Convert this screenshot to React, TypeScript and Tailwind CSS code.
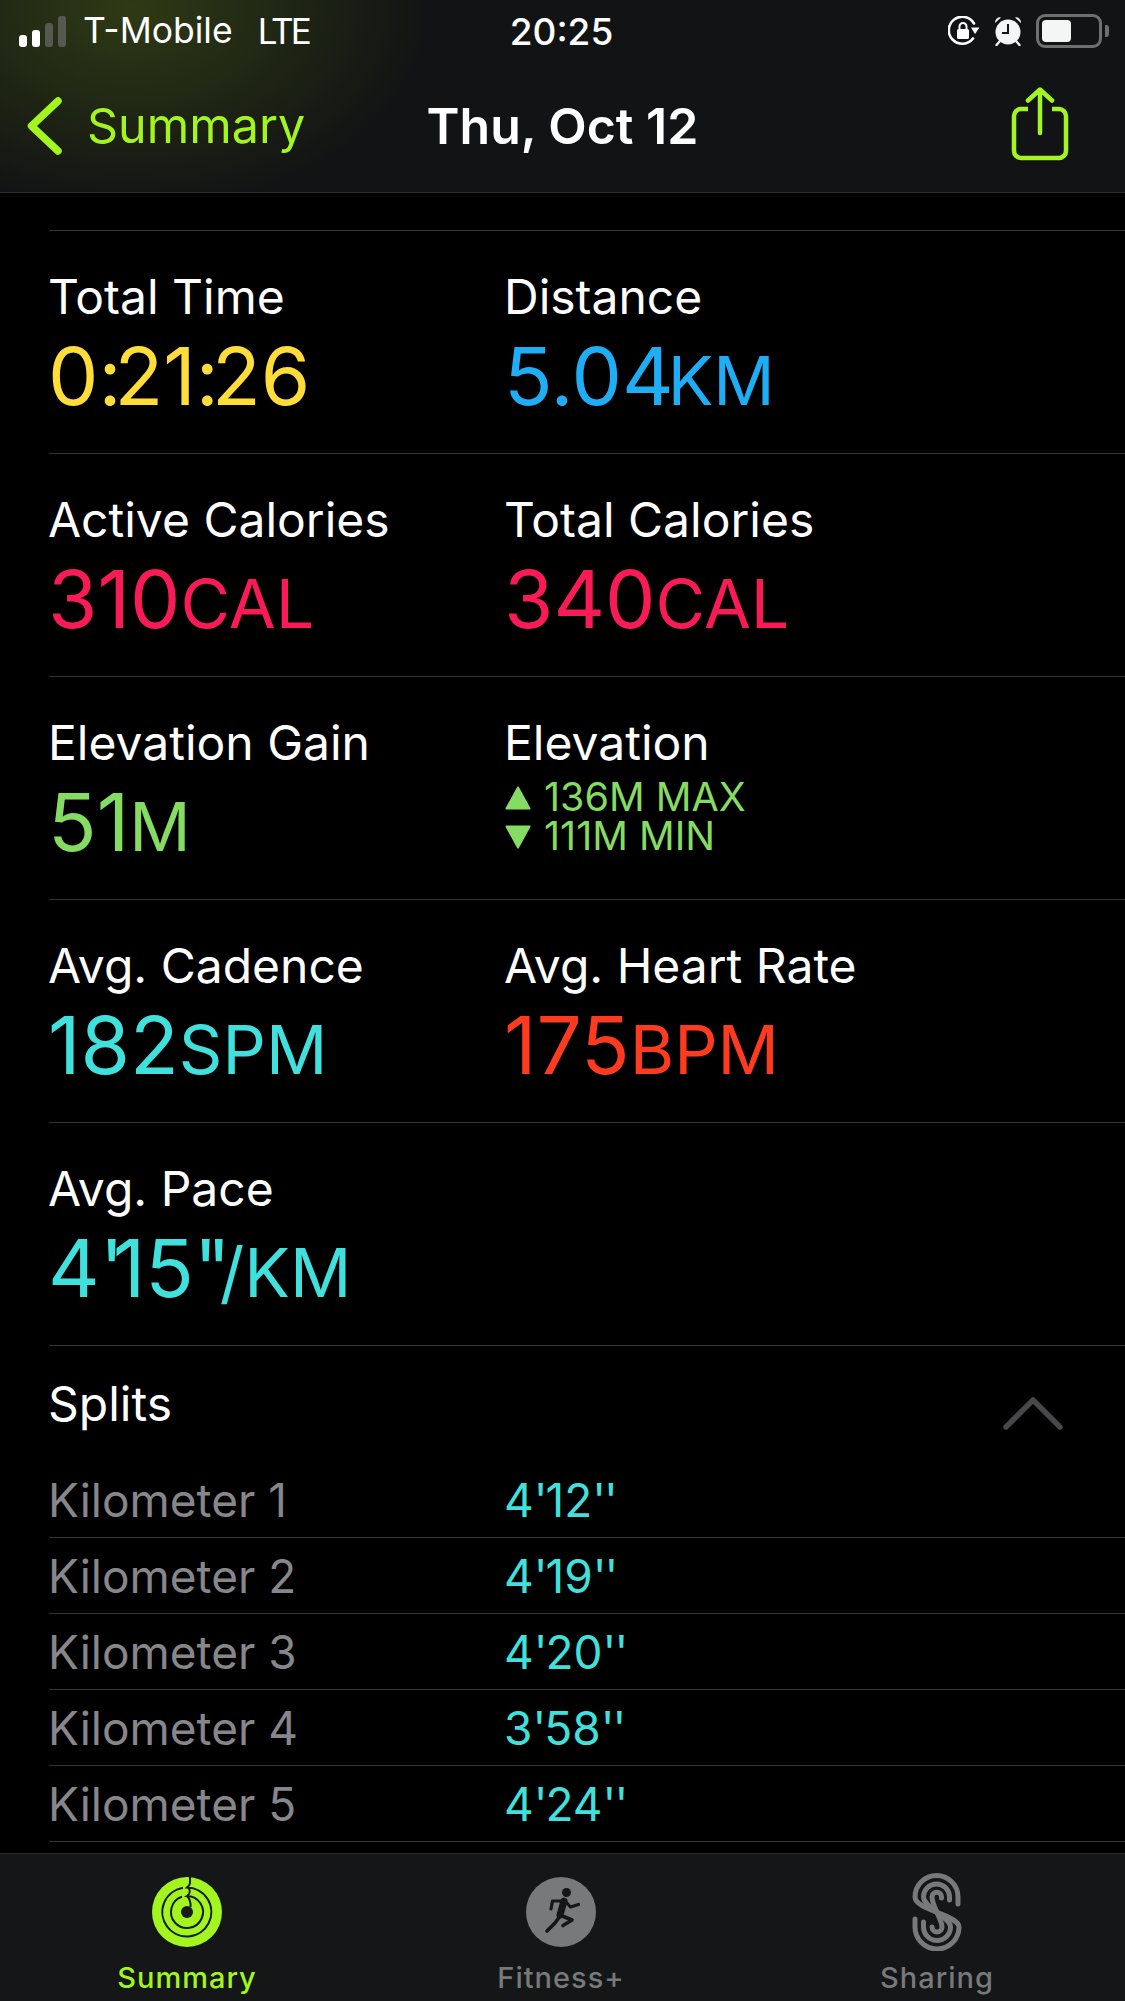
import { ReactNode } from "react";

type Stat = {
  label: string;
  value?: string;
  unit?: string;
  color?: string;
};

// colours are written out in full so the stylesheet picks them up
const ROWS: Stat[][] = [
  [
    { label: "Total Time", value: "0:21:26", color: "text-[#fedc3a]" },
    { label: "Distance", value: "5.04", unit: "KM", color: "text-[#1fadf5]" },
  ],
  [
    { label: "Active Calories", value: "310", unit: "CAL", color: "text-[#f91b55]" },
    { label: "Total Calories", value: "340", unit: "CAL", color: "text-[#f91b55]" },
  ],
  [{ label: "Elevation Gain", value: "51", unit: "M", color: "text-[#86dc62]" }, { label: "Elevation" }],
  [
    { label: "Avg. Cadence", value: "182", unit: "SPM", color: "text-[#40e0dd]" },
    { label: "Avg. Heart Rate", value: "175", unit: "BPM", color: "text-[#ff3b1f]" },
  ],
  [{ label: "Avg. Pace", value: "4'15''", unit: "/KM", color: "text-[#40e0dd]" }],
];

const SPLITS = [
  ["Kilometer 1", "4'12''"],
  ["Kilometer 2", "4'19''"],
  ["Kilometer 3", "4'20''"],
  ["Kilometer 4", "3'58''"],
  ["Kilometer 5", "4'24''"],
];

// SF's colons and primes are much narrower than Inter's
function Tight({ text, className }: { text: string; className: string }) {
  return (
    <>
      {text.split(/([':])/).map((part, i) =>
        part === "'" || part === ":" ? (
          <span key={i} className={className}>
            {part}
          </span>
        ) : (
          part
        )
      )}
    </>
  );
}

function StatusBar() {
  return (
    <div className="h-[62px] grid grid-cols-[1fr_auto_1fr] items-center pl-[14px] pr-[16px] text-white">
      <div className="flex items-center">
        <div className="ml-[5px] flex items-end gap-[5px] h-[32px] w-[47px]">
          <div className="w-[8px] h-[12px] rounded-[3px] bg-white" />
          <div className="w-[8px] h-[17px] rounded-[3px] bg-white" />
          <div className="w-[8px] h-[24px] rounded-[3px] bg-[#55594f]" />
          <div className="w-[8px] h-[31px] rounded-[3px] bg-[#55594f]" />
        </div>
        <span className="ml-[17px] text-[35.5px] leading-none">T-Mobile</span>
        <span className="ml-[25px] text-[35px] leading-none tracking-[-3px]">LTE</span>
      </div>
      <span className="text-[37px] leading-none font-medium">20:25</span>
      <div className="flex items-center justify-end gap-[14px]">
        <svg width="32" height="30" viewBox="0 0 32 30" fill="none">
          <path d="M25 22.5 A13.5 13.5 0 1 1 26 7.5" stroke="white" strokeWidth="2.6" strokeLinecap="round" />
          <path d="M23 11.5 H31.5 L27 18 Z" fill="white" />
          <rect x="9" y="13" width="12" height="10" rx="1.5" fill="white" />
          <path d="M11.5 13 V10.5 A3.5 3.5 0 0 1 18.5 10.5 V13" stroke="white" strokeWidth="2" />
        </svg>
        <svg width="28" height="30" viewBox="0 0 28 30" fill="none">
          <circle cx="14" cy="16" r="12.5" fill="#f4f6f6" />
          <path d="M14 8 V17 H8" stroke="#121314" strokeWidth="2" />
          <path d="M1 7 A5 5 0 0 1 7 1.5 Z" fill="#f4f6f6" />
          <path d="M27 7 A5 5 0 0 0 21 1.5 Z" fill="#f4f6f6" />
          <path d="M6 25 L2.5 29 M22 25 L25.5 29" stroke="#f4f6f6" strokeWidth="2.4" strokeLinecap="round" />
        </svg>
        <div className="flex items-center">
          <div className="w-[66px] h-[34px] rounded-[9px] border-[3px] border-[#6f6f6f] p-[3px]">
            <div className="w-[29px] h-full rounded-[4px] bg-[#f4f6f6]" />
          </div>
          <div className="ml-[3px] w-[4px] h-[12px] rounded-r-[3px] bg-[#6f6f6f]" />
        </div>
      </div>
    </div>
  );
}

function NavBar() {
  return (
    <div className="h-[130px] grid grid-cols-[1fr_auto_1fr] items-center pb-[2px]">
      <div className="flex items-center pl-[27px]">
        <svg width="35" height="58" viewBox="0 0 35 58" fill="none">
          <path d="M31 4 L4.5 29 L31 54" stroke="#a2f51e" strokeWidth="7.5" strokeLinecap="round" strokeLinejoin="round" />
        </svg>
        <span className="ml-[25px] text-[48.5px] leading-none text-[#a2f51e]">Summary</span>
      </div>
      <span className="text-[50px] leading-none font-semibold text-white">Thu, Oct 12</span>
      <div className="flex justify-end pr-[56px]">
        <svg width="58" height="74" viewBox="0 0 58 74" fill="none" className="mt-[-4px]">
          <path d="M17 22 H10 A7 7 0 0 0 3 29 V64 A7 7 0 0 0 10 71 H48 A7 7 0 0 0 55 64 V29 A7 7 0 0 0 48 22 H41" stroke="#a2f51e" strokeWidth="4.5" />
          <path d="M29 46 V3 M17 13.5 L29 2.5 L41 13.5" stroke="#a2f51e" strokeWidth="4.5" strokeLinecap="round" strokeLinejoin="round" />
        </svg>
      </div>
    </div>
  );
}

function ElevationRange() {
  return (
    <div className="mt-[6px] text-[39.5px] leading-[39px] text-[#86dc62]">
      <div className="flex items-center gap-[13px]">
        <svg width="26" height="26" viewBox="0 0 26 26">
          <path d="M13 2.5 L24.5 23.5 H1.5 Z" fill="#86dc62" stroke="#86dc62" strokeWidth="2" strokeLinejoin="round" />
        </svg>
        <span>136M MAX</span>
      </div>
      <div className="flex items-center gap-[13px]">
        <svg width="26" height="26" viewBox="0 0 26 26">
          <path d="M13 23.5 L24.5 2.5 H1.5 Z" fill="#86dc62" stroke="#86dc62" strokeWidth="2" strokeLinejoin="round" />
        </svg>
        <span>111M MIN</span>
      </div>
    </div>
  );
}

function StatCell({ stat }: { stat: Stat }) {
  const isPace = stat.value?.includes("'");
  return (
    <div className="w-[456px] pt-[37px]">
      <div className="ml-[-1px] text-[48px] leading-[58px] text-white">{stat.label}</div>
      {stat.value ? (
        <div className={`ml-[-1px] mt-[6px] leading-[88px] whitespace-nowrap ${stat.color}`}>
          <span className="text-[80px]">
            <Tight text={stat.value} className={isPace ? "tracking-[-11px]" : "tracking-[-7px]"} />
          </span>
          {stat.unit && <span className={`text-[68px] ${stat.unit === "KM" ? "ml-[-6px]" : ""}`}>{stat.unit}</span>}
        </div>
      ) : (
        <ElevationRange />
      )}
    </div>
  );
}

function TabItem({ icon, label, active, className }: { icon: ReactNode; label: string; active?: boolean; className: string }) {
  return (
    <div className={`flex flex-col items-center ${className}`}>
      <div className="h-[78px] flex items-center justify-center">{icon}</div>
      <span className={`mt-[12px] text-[29px] leading-none font-medium tracking-[1px] ${active ? "text-[#a2f51e]" : "text-[#77797a]"}`}>{label}</span>
    </div>
  );
}

function RingsIcon() {
  return (
    <svg width="72" height="72" viewBox="-36 -36 72 72" fill="none">
      <circle r="35" fill="#a2f51e" />
      <circle r="6" fill="#17191a" />
      <path d="M3 -35 V-29 C3 -26.5 1 -25.5 0 -24.5 A24.5 24.5 0 1 1 -4 -24.2" stroke="#17191a" strokeWidth="2" />
      <path d="M1 -24.5 C4 -22 3 -18 0 -16 A16 16 0 1 1 -5 -15.2" stroke="#17191a" strokeWidth="2" />
      <path d="M0 -16 C2 -14 4 -11 3.5 -5" stroke="#17191a" strokeWidth="2" />
    </svg>
  );
}

function RunnerIcon() {
  return (
    <svg width="72" height="72" viewBox="-36 -36 72 72" fill="none">
      <circle r="35" fill="#77797a" />
      <circle cx="5.5" cy="-19.5" r="4.5" fill="#141617" />
      <g stroke="#141617" strokeLinecap="round" strokeLinejoin="round">
        <path d="M-10 -3 L-8.5 -11 H4" strokeWidth="3.2" />
        <path d="M4 -11 L9.5 -5 L17.5 -7.5" strokeWidth="3.2" />
        <path d="M3 -11 L-1 3" strokeWidth="7" />
        <path d="M-1 4 L-6 11 L-14 19" strokeWidth="3.6" />
        <path d="M-1 3 L11 8 L2 13.5" strokeWidth="3.6" />
      </g>
    </svg>
  );
}

function SharingIcon() {
  return (
    <svg width="50" height="78" viewBox="0 0 50 78" fill="none" stroke="#77797a" strokeWidth="5" strokeLinecap="round">
      <path d="M46 31 V24 A21.5 21.5 0 0 0 3 24 C3 37 47 42 47 54 A22 22 0 0 1 3 54 V46" />
      <path d="M37.5 27 V24 A13 13 0 0 0 11.5 24 C11.5 35 38.5 44 38.5 54 A13.5 13.5 0 0 1 11.5 54 V49" />
      <path d="M29.5 25 V24 A4.5 4.5 0 0 0 20 24 C20 33 30 46 30 54 A5 5 0 0 1 20 54" />
    </svg>
  );
}

export default function App() {
  return (
    <div className="w-[1125px] h-[2001px] flex flex-col bg-black overflow-hidden font-['Inter',sans-serif]">
      {/* top bars */}
      <div className="h-[193px] shrink-0 border-b border-[#2a2b2c] bg-[#121314] bg-[radial-gradient(ellipse_300px_200px_at_130px_10px,#2e3a15,#121314)]">
        <StatusBar />
        <NavBar />
      </div>

      <main className="flex-1 min-h-0 pt-[37px] pl-[49px]">
        <div className="border-t border-[#353537]">
          {ROWS.map((row, i) => (
            <div key={i} className="h-[223px] flex border-b border-[#353537]">
              {row.map((stat) => (
                <StatCell key={stat.label} stat={stat} />
              ))}
            </div>
          ))}
        </div>

        {/* splits */}
        <div className="h-[116px] flex items-start justify-between pt-[29px] pr-[62px]">
          <span className="ml-[-1px] text-[48px] leading-[58px] text-white">Splits</span>
          <svg width="60" height="34" viewBox="0 0 60 34" fill="none" className="mt-[21px]">
            <path d="M3 31 L30 4 L57 31" stroke="#48484a" strokeWidth="5.5" strokeLinecap="round" strokeLinejoin="round" />
          </svg>
        </div>
        {SPLITS.map(([name, time]) => (
          <div key={name} className="h-[76px] flex items-center border-b border-[#353537] text-[46px]">
            <span className="ml-[-1px] w-[456px] pt-[2px] text-[#86868b]">{name}</span>
            <span className="pt-[2px] text-[#40e0dd]">
              <Tight text={time} className="tracking-[-2px]" />
            </span>
          </div>
        ))}
      </main>

      <nav className="h-[148px] shrink-0 border-t border-[#2a2b2c] bg-[#141617] flex pt-[19px]">
        <TabItem className="ml-[113px] w-[148px]" icon={<RingsIcon />} label="Summary" active />
        <TabItem className="ml-[226px] w-[148px]" icon={<RunnerIcon />} label="Fitness+" />
        <TabItem className="ml-[228px] w-[148px]" icon={<SharingIcon />} label="Sharing" />
      </nav>
    </div>
  );
}
